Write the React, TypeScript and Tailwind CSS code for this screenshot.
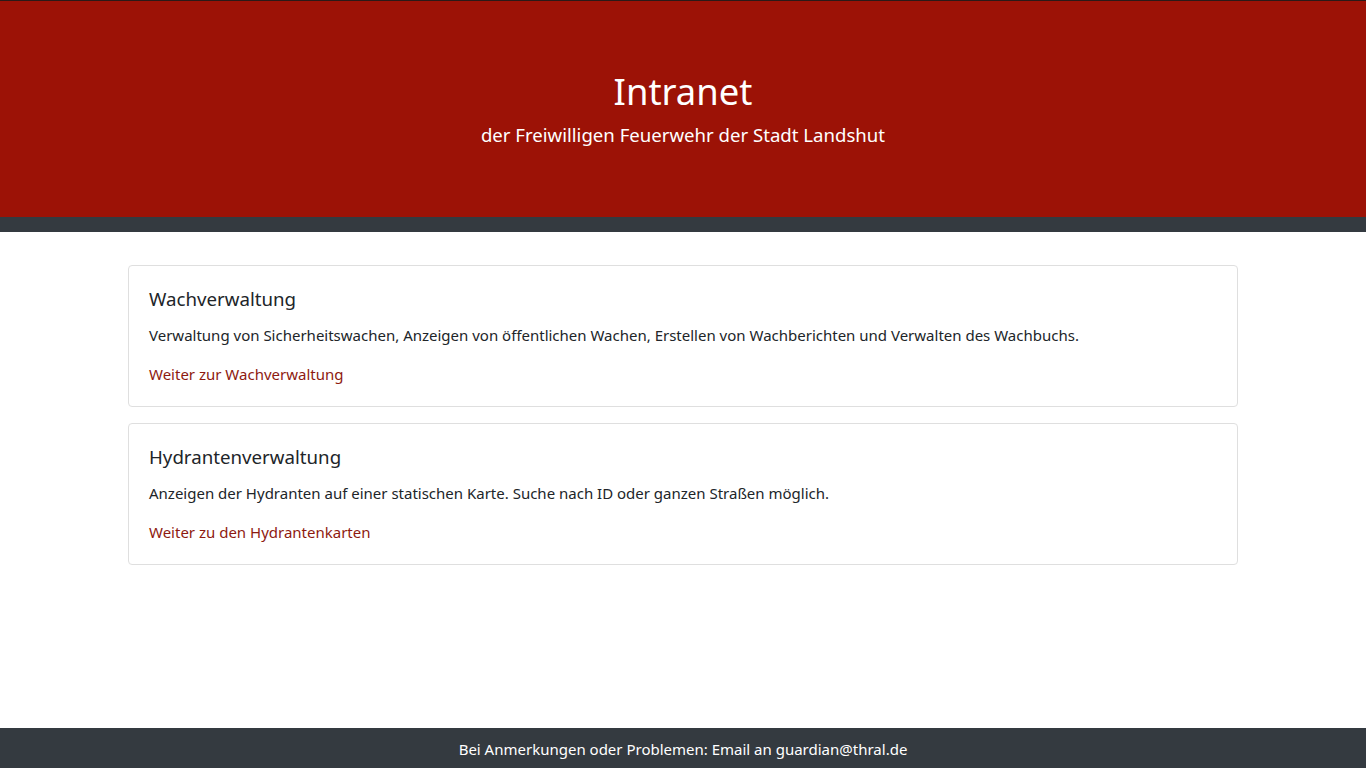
import React from "react";

const font = { fontFamily: '"Noto Sans", "Open Sans", sans-serif' };

function Card({ title, text, link }: { title: string; text: string; link: string }) {
  return (
    <div className="border border-[#dfdfdf] rounded-[4px] px-5 pt-[21px] pb-[20px] bg-white">
      <h5 className="text-[18.7px] leading-[24px] mb-3 text-[#212529]">{title}</h5>
      <p className="text-[15px] leading-[24px] mb-[15px] text-[#212529]">{text}</p>
      <a className="text-[15px] leading-[24px] text-[#8e1a10] block" href="#">{link}</a>
    </div>
  );
}

export default function App() {
  return (
    <div className="min-h-[768px] flex flex-col bg-white" style={font}>
      <div className="h-px bg-[#2b1a18]" />
      <header className="bg-[#9c1206] h-[216px] flex flex-col items-center pt-[66px] text-white">
        <h1 className="text-[36.4px] leading-[48px] font-normal">Intranet</h1>
        <p className="text-[18.6px] leading-[30px] mt-[5px]">der Freiwilligen Feuerwehr der Stadt Landshut</p>
      </header>
      <div className="h-[15px] bg-[#343a40]" />
      <main className="flex-1 w-[1110px] mx-auto pt-[33px] flex flex-col gap-4">
        <Card
          title="Wachverwaltung"
          text="Verwaltung von Sicherheitswachen, Anzeigen von öffentlichen Wachen, Erstellen von Wachberichten und Verwalten des Wachbuchs."
          link="Weiter zur Wachverwaltung"
        />
        <Card
          title="Hydrantenverwaltung"
          text="Anzeigen der Hydranten auf einer statischen Karte. Suche nach ID oder ganzen Straßen möglich."
          link="Weiter zu den Hydrantenkarten"
        />
      </main>
      <footer className="h-10 bg-[#343a40] flex items-center justify-center text-white text-[15px] leading-[24px] pt-px">
        Bei Anmerkungen oder Problemen: Email an guardian@thral.de
      </footer>
    </div>
  );
}
